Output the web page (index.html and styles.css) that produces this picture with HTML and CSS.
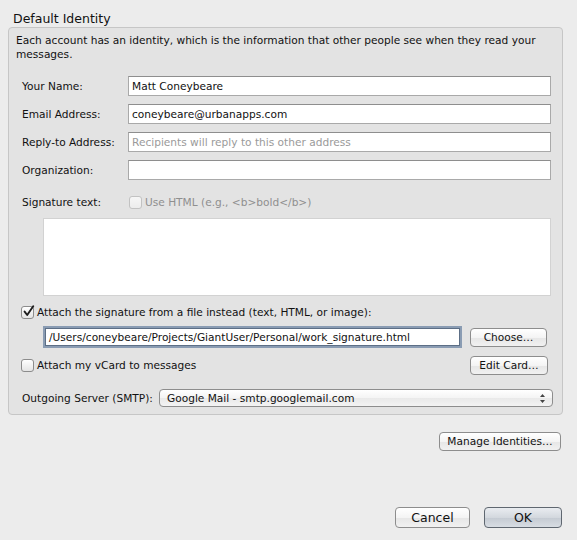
FILE: index.html
```html
<!DOCTYPE html>
<html>
<head>
<meta charset="utf-8">
<link rel="stylesheet" href="styles.css">
</head>
<body>
<div class="title">Default Identity</div>
<div class="group">
  <div class="desc">Each account has an identity, which is the information that other people see when they read your messages.</div>
  <div class="fields">
    <div class="row"><span class="label">Your Name:</span><div class="input">Matt Coneybeare</div></div>
    <div class="row"><span class="label">Email Address:</span><div class="input">coneybeare@urbanapps.com</div></div>
    <div class="row"><span class="label">Reply-to Address:</span><div class="input placeholder">Recipients will reply to this other address</div></div>
    <div class="row"><span class="label">Organization:</span><div class="input"></div></div>
  </div>
  <div class="sigrow">
    <span class="label">Signature text:</span>
    <span class="check disabled"></span>
    <span class="disabled-text">Use HTML (e.g., &lt;b&gt;bold&lt;/b&gt;)</span>
  </div>
  <div class="textarea"></div>
  <div class="checkrow attach">
    <span class="check checked"><svg width="13" height="13" viewBox="0 0 13 13"><path d="M2.6 6.6 L5.2 10 L11.2 1.2" fill="none" stroke="#1d1d1d" stroke-width="1.9" stroke-linecap="round" stroke-linejoin="round"/></svg></span>
    <span>Attach the signature from a file instead (text, HTML, or image):</span>
  </div>
  <div class="filerow">
    <div class="input focused">/Users/coneybeare/Projects/GiantUser/Personal/work_signature.html</div>
    <div class="btn choose">Choose…</div>
  </div>
  <div class="checkrow vcard">
    <span class="check"></span>
    <span>Attach my vCard to messages</span>
    <div class="btn editcard">Edit Card…</div>
  </div>
  <div class="smtprow">
    <span class="smtplabel">Outgoing Server (SMTP):</span>
    <div class="select">
      <span>Google Mail - smtp.googlemail.com</span>
      <svg class="arrows" width="7" height="11" viewBox="0 0 7 11"><path d="M3.5 1 L6 4 H1 Z M3.5 10 L6 7 H1 Z" fill="#444"/></svg>
    </div>
  </div>
</div>
<div class="manage"><div class="btn managebtn">Manage Identities…</div></div>
<div class="footer">
  <div class="btn bigbtn">Cancel</div>
  <div class="btn bigbtn ok">OK</div>
</div>
</body>
</html>
```
FILE: styles.css
```css
html, body {
  margin: 0;
  padding: 0;
}
body {
  width: 577px;
  height: 540px;
  background: #ececec;
  font-family: "DejaVu Sans", "Liberation Sans", sans-serif;
  font-size: 10.6px;
  color: #111;
  overflow: hidden;
}
.title {
  font-size: 12.5px;
  padding: 10px 0 0 13px;
  height: 17px;
  line-height: 17px;
}
.group {
  margin-left: 8px;
  width: 553px;
  height: 386px;
  border: 1px solid #c6c6c6;
  border-radius: 4px;
  background: #e3e3e3;
}
.desc {
  padding: 5px 10px 0 7px;
  line-height: 14px;
}
.fields {
  margin-top: 15px;
  display: flex;
  flex-direction: column;
  gap: 8px;
}
.row {
  display: flex;
  align-items: center;
  height: 20px;
}
.label {
  width: 106px;
  padding-left: 13px;
  flex: none;
}
.input {
  box-sizing: border-box;
  width: 423px;
  height: 20px;
  background: #fff;
  border: 1px solid #a9a9a9;
  border-top-color: #8e8e8e;
  padding: 0 3px;
  line-height: 18px;
  white-space: nowrap;
  overflow: hidden;
}
.placeholder {
  color: #9a9a9a;
}
.sigrow {
  margin-top: 15px;
  display: flex;
  align-items: center;
  height: 14px;
}
.sigrow .label {
  width: 107px;
}
.check {
  box-sizing: border-box;
  width: 13px;
  height: 13px;
  border: 1px solid #8c8c8c;
  border-radius: 3px;
  background: linear-gradient(#ffffff, #e4e4e4);
  flex: none;
  position: relative;
  margin-right: 3px;
}
.check svg {
  position: absolute;
  left: 0;
  top: -2px;
}
.check.disabled {
  border-color: #c2c2c2;
  background: linear-gradient(#f6f6f6, #ececec);
}
.disabled-text {
  color: #8f8f8f;
}
.textarea {
  margin: 9px 0 0 34px;
  width: 508px;
  height: 78px;
  box-sizing: border-box;
  background: #fff;
  border: 1px solid #d2d2d2;
}
.checkrow {
  display: flex;
  align-items: center;
  padding-left: 12px;
  height: 14px;
}
.attach {
  margin-top: 9px;
}
.filerow {
  display: flex;
  align-items: center;
  margin-top: 7px;
  height: 22px;
  padding-left: 35px;
}
.input.focused {
  width: 415px;
  height: 18px;
  line-height: 16px;
  border: 1px solid #5d6f86;
  box-shadow: 0 0 0 2px #8a9cb3;
  padding-left: 3px;
  margin-left: 1px;
}
.btn {
  box-sizing: border-box;
  border: 1px solid #8d8d8d;
  border-radius: 4px;
  background: linear-gradient(#ffffff 0%, #f4f4f4 50%, #e6e6e6 51%, #f1f1f1 100%);
  text-align: center;
  flex: none;
}
.choose {
  width: 77px;
  height: 19px;
  line-height: 17px;
  margin-left: 10px;
}
.vcard {
  margin-top: 8px;
  height: 18px;
}
.editcard {
  width: 78px;
  height: 19px;
  line-height: 17px;
  margin-left: auto;
  margin-right: 14px;
}
.smtprow {
  display: flex;
  align-items: center;
  margin-top: 15px;
  height: 18px;
  padding-left: 13px;
}
.smtplabel {
  width: 137px;
  flex: none;
}
.select {
  box-sizing: border-box;
  width: 394px;
  height: 18px;
  border: 1px solid #8d8d8d;
  border-radius: 4px;
  background: linear-gradient(#ffffff 0%, #f4f4f4 50%, #e9e9e9 51%, #f3f3f3 100%);
  display: flex;
  align-items: center;
  padding: 0 6px 0 7px;
  justify-content: space-between;
}
.manage {
  display: flex;
  justify-content: flex-end;
  padding-right: 16px;
  margin-top: 17px;
}
.managebtn {
  width: 122px;
  height: 19px;
  line-height: 17px;
}
.footer {
  display: flex;
  justify-content: flex-end;
  gap: 14px;
  padding-right: 15px;
  margin-top: 56px;
}
.bigbtn {
  width: 75px;
  height: 21px;
  line-height: 19px;
  font-size: 12.5px;
}
.ok {
  width: 78px;
  border-color: #5f6770;
  background: linear-gradient(#e9ecf0 0%, #d3d8de 50%, #c4cad2 51%, #d8dde3 100%);
}
```
